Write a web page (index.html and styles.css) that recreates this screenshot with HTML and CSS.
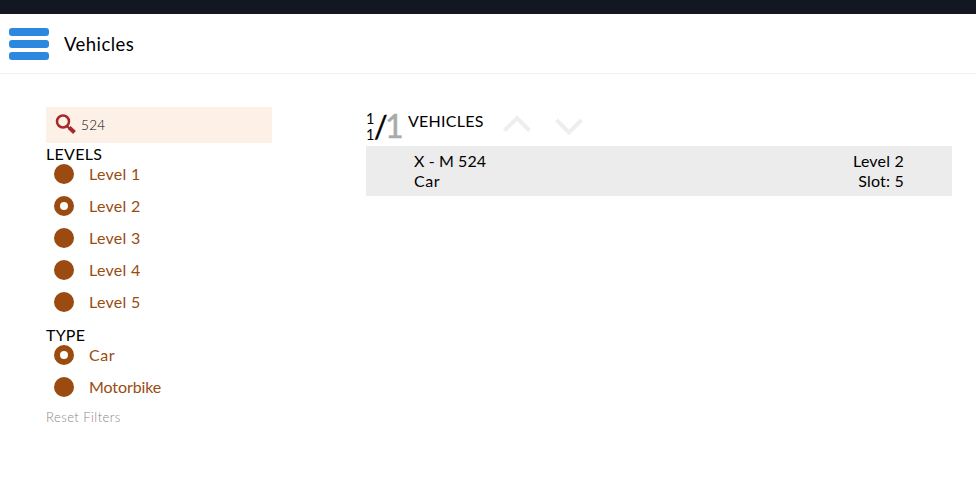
FILE: index.html
```html
<!DOCTYPE html>
<html lang="en">
<head>
<meta charset="utf-8">
<title>Vehicles</title>
<link rel="stylesheet" href="styles.css">
</head>
<body>
<div class="topbar"></div>
<header class="header">
  <button class="menu" aria-label="Menu"><span></span><span></span><span></span></button>
  <h1><span>Vehicles</span></h1>
</header>
<main class="layout">
  <aside class="filters">
    <label class="search">
      <svg width="22" height="22" viewBox="0 0 22 22" fill="none" stroke="#a52a2a">
        <circle cx="8" cy="7.500" r="6" stroke-width="2.500"/>
        <path d="M12 12l3 3" stroke-width="2.200"/>
        <path d="M14.200 13.500l5.300 5" stroke-width="4"/>
      </svg>
      <span>524</span>
    </label>
    <h2 class="levels"><span>LEVELS</span></h2>
    <ul>
      <li><i class="dot"></i><span>Level 1</span></li>
      <li><i class="dot on"></i><span>Level 2</span></li>
      <li><i class="dot"></i><span>Level 3</span></li>
      <li><i class="dot"></i><span>Level 4</span></li>
      <li><i class="dot"></i><span>Level 5</span></li>
    </ul>
    <h2 class="type"><span>TYPE</span></h2>
    <ul>
      <li><i class="dot on"></i><span class="car">Car</span></li>
      <li><i class="dot"></i><span class="motorbike">Motorbike</span></li>
    </ul>
    <a class="reset"><span>Reset Filters</span></a>
  </aside>
  <section class="results">
    <div class="summary">
      <div class="range"><span>1</span><span>1</span></div>
      <span class="slash">/</span>
      <span class="total">1</span>
      <span class="caption">VEHICLES</span>
      <svg class="arrow" width="28" height="18" viewBox="0 0 28 18"><path d="M1.500 15.500L14 3l12.500 12.500"/></svg>
      <svg class="arrow" width="28" height="18" viewBox="0 0 28 18"><path d="M1.500 3L14 15.500L26.500 3"/></svg>
    </div>
    <article class="card">
      <div><p class="name"><span>X - M 524</span></p><p class="car"><span>Car</span></p></div>
      <div class="place"><p><span>Level 2</span></p><p><span>Slot: 5</span></p></div>
    </article>
  </section>
</main>
</body>
</html>
```
FILE: styles.css
```css
* { box-sizing: border-box; margin: 0; padding: 0; }
body { background: #fff; color: #000; font: 16px/20px Lato, sans-serif; }
.topbar { height: 14px; background: #131722; }
.header { display: flex; align-items: center; height: 60px; padding-left: 9px; border-bottom: 1px solid #f2f2f2; }
.menu { display: flex; flex-direction: column; gap: 4px; width: 40px; border: 0; background: none; }
.menu span { height: 8px; border-radius: 3px; background: #2b88de; }
h1 { margin: 0 0 0 15px; font-size: 18.500px; font-weight: 400; letter-spacing: .45px; }
.layout { display: flex; padding: 33px 24px 0 46px; }
.filters { width: 226px; }
.search { display: flex; align-items: center; height: 36px; padding-left: 9px; background: #fdf0e7; }
.search span { margin-left: 4px; font-size: 13.500px; font-weight: 300; letter-spacing: .3px; color: #000; }
h2 { font-size: 16px; line-height: 20px; font-weight: 400; }
.levels { margin-top: 1px; height: 20px; letter-spacing: .3px; }
.type { margin-top: 1px; height: 20px; letter-spacing: .2px; }
ul { list-style: none; }
li { display: flex; align-items: flex-start; height: 32px; padding-left: 8px; color: #994c12; }
li span { margin-left: 15px; line-height: 19px; letter-spacing: .3px; }
.dot { width: 20px; height: 20px; border-radius: 50%; background: #9b4b10; }
.dot.on { background: #fff; border: 6px solid #9b4b10; }
li .motorbike { letter-spacing: -.1px; }
.car { letter-spacing: .5px; }
.reset { display: block; margin-top: -2px; font-size: 13px; font-weight: 300; color: #888; letter-spacing: .45px; }
.results { flex: 1; margin-left: 94px; }
.summary { display: flex; align-items: flex-start; height: 39px; }
.range { display: flex; flex-direction: column; width: 8px; padding-top: 4px; font-size: 14.500px; line-height: 16px; }
.slash { width: 11px; margin-top: 3px; font-size: 30px; line-height: 32px; -webkit-text-stroke: .4px #000; }
.total { width: 23px; margin-top: 3px; font-size: 32px; line-height: 32px; color: #aaa; -webkit-text-stroke: .5px #aaa; }
.caption { width: 94px; padding-top: 4px; letter-spacing: .25px; }
.arrow { margin: 8px 24px 0 1px; fill: none; stroke: #eee; stroke-width: 4; }
.arrow + .arrow { margin-left: 0; margin-top: 10px; }
.card { display: flex; justify-content: space-between; height: 50px; padding: 5px 48px; background: #ececec; }
.name { letter-spacing: .1px; }
.place { text-align: right; letter-spacing: .2px; }
```
